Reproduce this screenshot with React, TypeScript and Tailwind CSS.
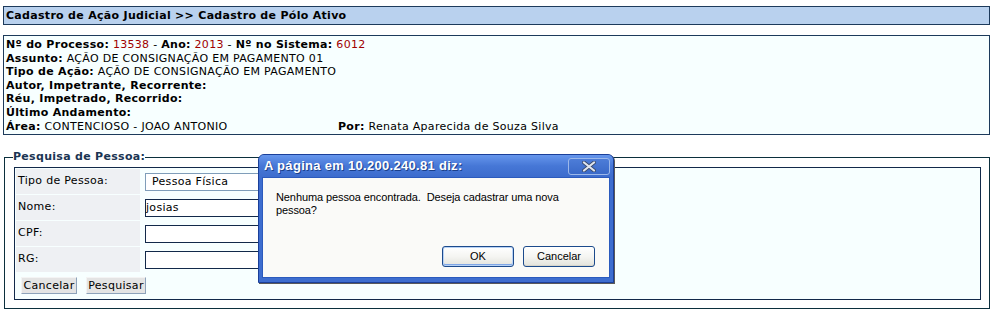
import React from "react";

const V = "font-['Verdana','DejaVu_Sans',sans-serif]";
const T = "font-['Tahoma','Liberation_Sans',sans-serif]";

function Red({ children }: { children: React.ReactNode }) {
  return <span className="text-[#a00000]">{children}</span>;
}

function LabelRow({ label, children }: { label: string; children: React.ReactNode }) {
  return (
    <div className="flex items-center h-[25px]">
      <div className="w-[124px] h-full bg-[#eef0f3] flex items-center pl-[2px]">{label}</div>
      <div className="pl-[5px] flex items-center">{children}</div>
    </div>
  );
}

function PageButton({ children, w }: { children: React.ReactNode; w: string }) {
  return (
    <button
      className={`${w} h-[17px] bg-[#e4e4e4] border border-t-[#f4f4f4] border-l-[#f4f4f4] border-r-[#8da2ba] border-b-[#8da2ba] text-[11px] leading-[14px] tracking-[0.3px] text-black ${V}`}
    >
      {children}
    </button>
  );
}

function XpButton({ children, def }: { children: React.ReactNode; def?: boolean }) {
  return (
    <button
      className={`w-[72px] h-[21px] rounded-[3px] border border-[#1c4a8c] bg-gradient-to-b from-[#ffffff] via-[#f5f5f2] to-[#e3e3dc] text-[11px] tracking-normal text-black ${T} ${
        def ? "shadow-[inset_0_0_0_1px_#b8d2f5,inset_0_-1px_0_1px_#7fa6e6]" : "shadow-[inset_0_-1px_0_0_#d8d6cc]"
      }`}
    >
      {children}
    </button>
  );
}

export default function App() {
  return (
    <div className={`w-[995px] h-[313px] bg-white relative overflow-hidden text-[11px] tracking-[0.3px] text-black ${V}`}>
      <div className="pt-[6px] flex flex-col">
        {/* Header */}
        <div className="ml-[3px] w-[987px] h-[19px] border border-[#1d3a5b] bg-[#b9d1ee] pl-[2px] font-bold leading-[17px]">
          Cadastro de Ação Judicial &gt;&gt; Cadastro de Pólo Ativo
        </div>

        {/* Info box */}
        <div className="ml-[3px] mt-[10px] w-[987px] h-[100px] border border-[#1d3a5b] bg-[#f7ffff] px-[2px] pt-[2px] leading-[13.6px]">
          <div>
            <b>Nº do Processo:</b> <Red>13538</Red> - <b>Ano:</b> <Red>2013</Red> - <b>Nº no Sistema:</b>{" "}
            <Red>6012</Red>
          </div>
          <div>
            <b>Assunto:</b> AÇÃO DE CONSIGNAÇÃO EM PAGAMENTO 01
          </div>
          <div>
            <b>Tipo de Ação:</b> AÇÃO DE CONSIGNAÇÃO EM PAGAMENTO
          </div>
          <div>
            <b>Autor, Impetrante, Recorrente:</b>
          </div>
          <div>
            <b>Réu, Impetrado, Recorrido:</b>
          </div>
          <div>
            <b>Último Andamento:</b>
          </div>
          <div className="flex">
            <div className="w-[332px]">
              <b>Área:</b> CONTENCIOSO - JOAO ANTONIO
            </div>
            <div>
              <b>Por:</b> Renata Aparecida de Souza Silva
            </div>
          </div>
        </div>

        {/* Fieldset */}
        <fieldset className="ml-[4px] mt-[15px] w-[986px] border border-[#0b2f3d] pl-[9px] pr-[8px] pb-[8px]">
          <legend className="-ml-[1px] font-bold text-[#1b3553] leading-[14px] text-[11px]">Pesquisa de Pessoa:</legend>
          <div className="mt-[3px] w-[967px] h-[133px] border border-[#12294a] bg-[#f7ffff] pl-[1px] pt-[1px] flex flex-col gap-[1px]">
            <LabelRow label="Tipo de Pessoa:">
              <div className="w-[300px] h-[18px] border border-[#7f9db9] bg-white pl-[6px] leading-[16px]">Pessoa Física</div>
            </LabelRow>
            <LabelRow label="Nome:">
              <div className="w-[300px] h-[18px] border border-[#12294a] bg-white pl-[0px] leading-[16px]">josias</div>
            </LabelRow>
            <LabelRow label="CPF:">
              <div className="w-[300px] h-[18px] border border-[#12294a] bg-white" />
            </LabelRow>
            <LabelRow label="RG:">
              <div className="w-[300px] h-[18px] border border-[#12294a] bg-white" />
            </LabelRow>
            <div className="flex gap-[9px] pl-[5px] mt-[4px]">
              <PageButton w="w-[56px]">Cancelar</PageButton>
              <PageButton w="w-[60px]">Pesquisar</PageButton>
            </div>
          </div>
        </fieldset>
      </div>

      {/* Dialog */}
      <div className="absolute left-[258px] top-[154px] w-[356px] h-[129px] rounded-t-[6px] border border-[#1a3f99] bg-[#3d6dcf] flex flex-col shadow-[1px_1px_0_0_#5a5a5a]">
        <div className="h-[22px] rounded-t-[5px] bg-gradient-to-b from-[#6696ec] via-[#4677d6] to-[#3d6ccd] flex items-center justify-between pl-[5px] pr-[3px]">
          <span className={`text-white font-bold text-[13px] tracking-[0.3px] ${T} [text-shadow:1px_1px_0_#1a3f8a]`}>
            A página em 10.200.240.81 diz:
          </span>
          <div className="w-[42px] h-[17px] rounded-[3px] border border-[#9cb8ea] bg-gradient-to-b from-[#4d7dd8] to-[#3a69c8] flex items-center justify-center">
            <svg width="14" height="11" viewBox="0 0 14 11">
              <path d="M2 1.5 L12 9.5 M12 1.5 L2 9.5" stroke="#3a4a6a" strokeWidth="3.8" strokeLinecap="round" />
              <path d="M2 1.5 L12 9.5 M12 1.5 L2 9.5" stroke="#dfe6f0" strokeWidth="2.2" strokeLinecap="round" />
            </svg>
          </div>
        </div>
        <div className={`flex-1 mx-[3px] mb-[4px] bg-[#fafaf8] border border-[#2b5abd] flex flex-col tracking-[-0.1px] ${T}`}>
          <div className="pl-[13px] pt-[13px] pr-[40px] leading-[13px] text-[11px] whitespace-pre-wrap">
            {"Nenhuma pessoa encontrada.  Deseja cadastrar uma nova pessoa?"}
          </div>
          <div className="mt-auto mb-[10px] mr-[14px] flex justify-end gap-[9px]">
            <XpButton def>OK</XpButton>
            <XpButton>Cancelar</XpButton>
          </div>
        </div>
      </div>
    </div>
  );
}
